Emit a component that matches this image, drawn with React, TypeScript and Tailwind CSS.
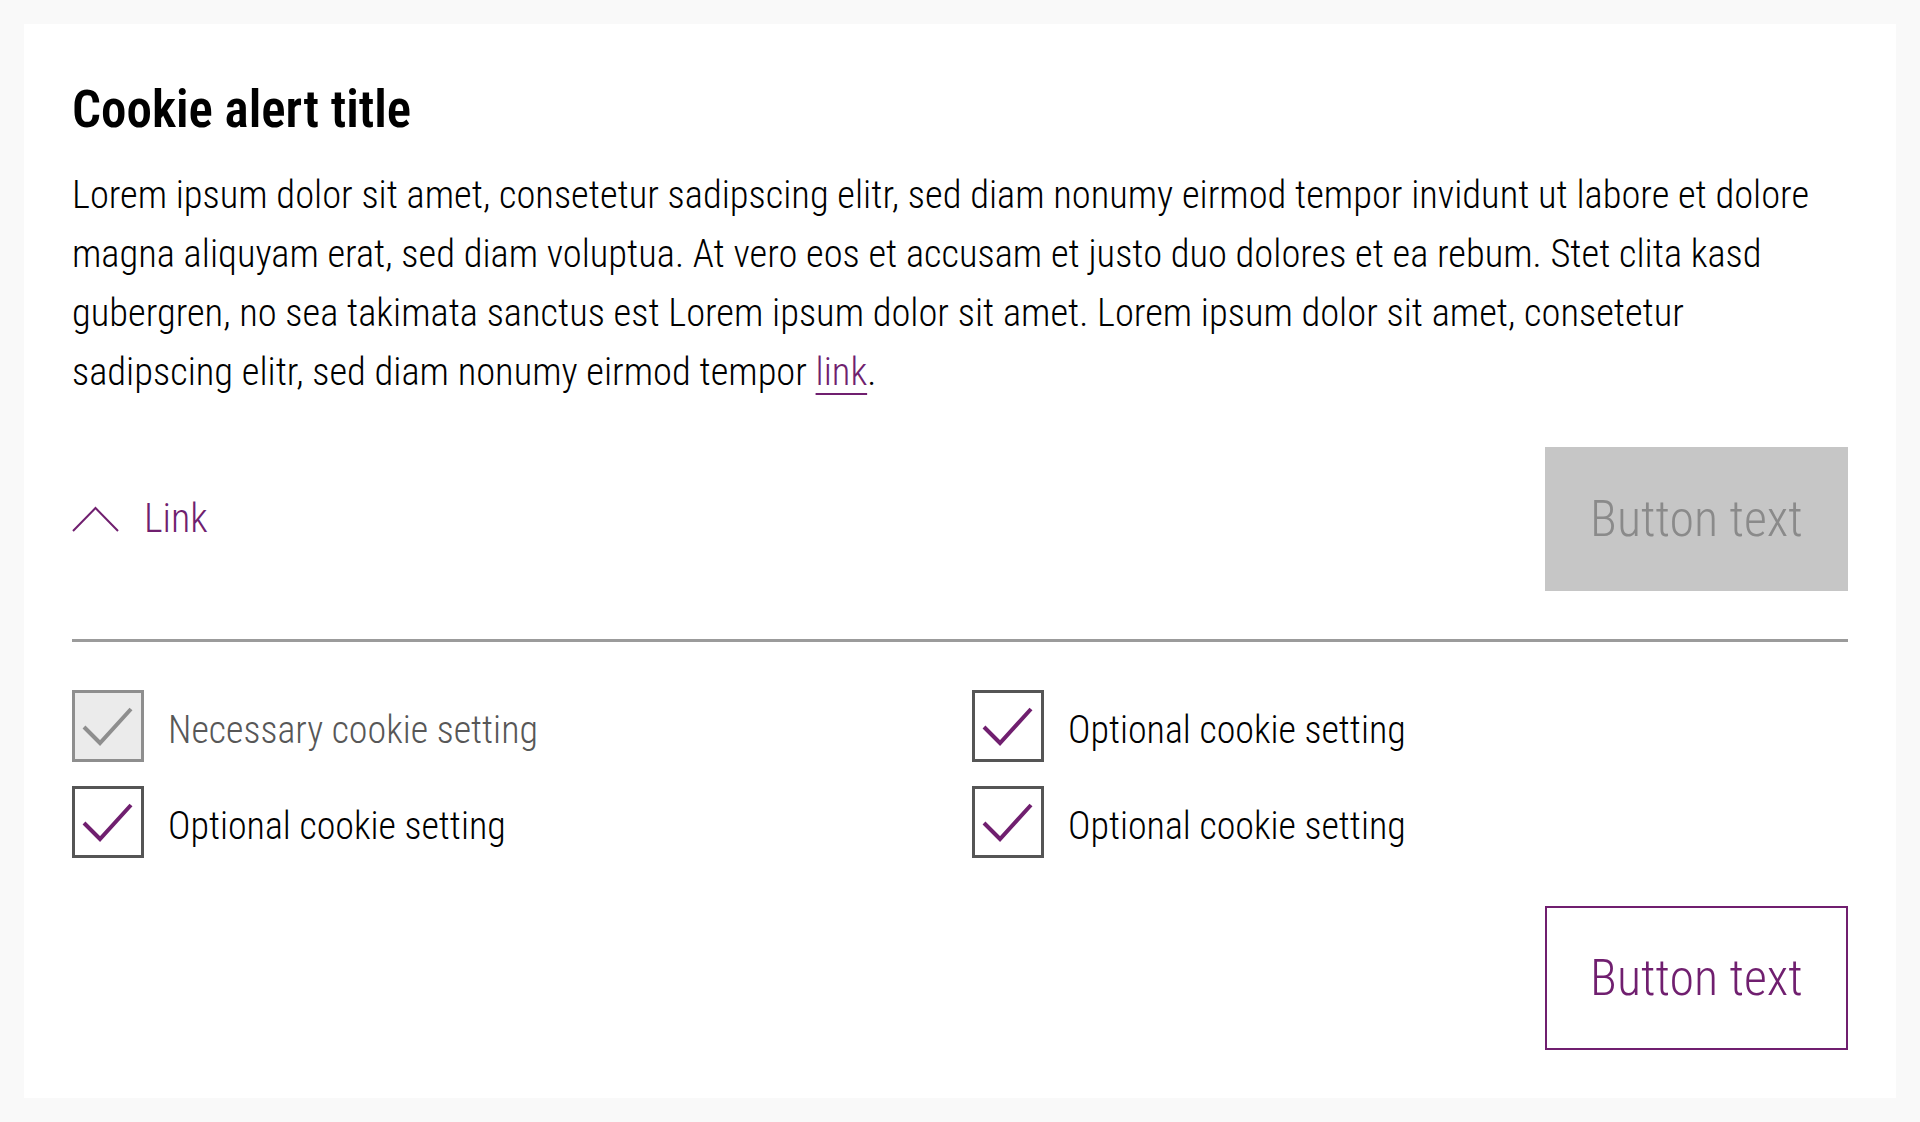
import React from 'react';

const purple = 'text-[#701f6f]';

function CheckBox({ disabled }: { disabled?: boolean }) {
  return (
    <span
      className={`flex h-[72px] w-[72px] shrink-0 border-[3px] ${
        disabled ? 'border-[#8e8e8e] bg-[#ebebeb]' : 'border-[#555555] bg-white'
      }`}
    >
      <svg width="66" height="66" viewBox="0 0 66 66" fill="none">
        <polyline
          points="9,34 25,50 56,16"
          stroke={disabled ? '#8e8e8e' : '#701f6f'}
          strokeWidth="4"
        />
      </svg>
    </span>
  );
}

function Setting({ label, disabled }: { label: string; disabled?: boolean }) {
  return (
    <label className="flex items-center gap-6">
      <CheckBox disabled={disabled} />
      <span className={`mt-2 text-[38px] leading-[64px] ${disabled ? 'text-[#575757]' : 'text-black'}`}>{label}</span>
    </label>
  );
}

export default function App() {
  return (
    <div className="min-h-screen bg-[#f9f9f9] p-6 font-['Roboto',sans-serif] font-stretch-condensed font-light">
      <div className="flex flex-col bg-white p-12">
        <h1 className="mt-[7px] text-[51px] leading-[62px] font-semibold text-black">Cookie alert title</h1>

        <p className="mt-[24px] max-w-[1745px] text-[38.5px] leading-[59px] text-black">
          Lorem ipsum dolor sit amet, consetetur sadipscing elitr, sed diam nonumy eirmod tempor invidunt ut labore et dolore
          magna aliquyam erat, sed diam voluptua. At vero eos et accusam et justo duo dolores et ea rebum. Stet clita kasd
          gubergren, no sea takimata sanctus est Lorem ipsum dolor sit amet. Lorem ipsum dolor sit amet, consetetur
          sadipscing elitr, sed diam nonumy eirmod tempor{' '}
          <a href="#" className={`${purple} underline decoration-2 underline-offset-[8px]`}>
            link
          </a>
          .
        </p>

        <div className="mt-[46px] flex items-center justify-between">
          <a href="#" className={`flex items-center gap-[25px] ${purple}`}>
            <svg width="47" height="26" viewBox="0 0 47 26" fill="none">
              <polyline points="1,25 23.5,2 46,25" stroke="#701f6f" strokeWidth="2" />
            </svg>
            <span className="text-[40px] leading-none">Link</span>
          </a>
          <button
            type="button"
            disabled
            className="flex h-[144px] w-[303px] items-center justify-center bg-[#c6c6c6] text-[50px] text-[#8a8a8a]"
          >
            Button text
          </button>
        </div>

        <div className="mt-12 h-[3px] bg-[#9b9b9b]" />

        <div className="mt-12 grid grid-cols-2 gap-x-6 gap-y-6">
          <Setting label="Necessary cookie setting" disabled />
          <Setting label="Optional cookie setting" />
          <Setting label="Optional cookie setting" />
          <Setting label="Optional cookie setting" />
        </div>

        <div className="mt-12 flex justify-end">
          <button
            type="button"
            className={`flex h-[144px] w-[303px] items-center justify-center border-2 border-[#701f6f] bg-white text-[50px] ${purple}`}
          >
            Button text
          </button>
        </div>
      </div>
    </div>
  );
}
